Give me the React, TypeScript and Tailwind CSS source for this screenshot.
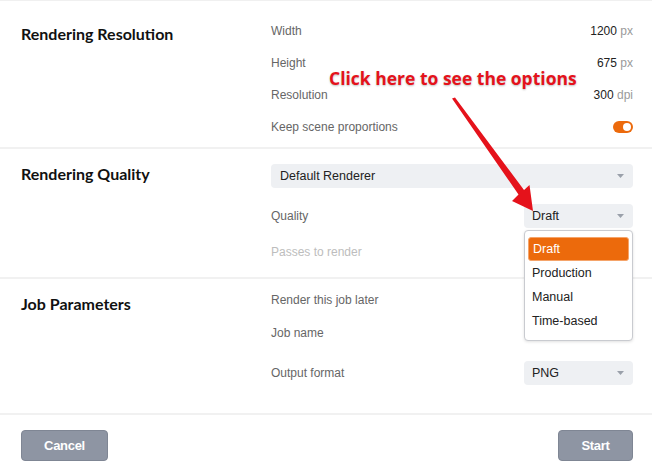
import React from "react";

const body = "font-['Liberation_Sans',Arial,sans-serif]";

function Caret() {
  return (
    <svg width="7" height="4" viewBox="0 0 7 4" className="shrink-0">
      <path d="M0 0 L7 0 L3.5 4 Z" fill="#9aa0aa" />
    </svg>
  );
}

function Select({ value, className = "" }: { value: string; className?: string }) {
  return (
    <div
      className={`h-6 rounded-[4px] bg-[#eef0f3] flex items-center justify-between pl-2 pr-[9px] text-[12.5px] text-[#222] ${className}`}
    >
      <span>{value}</span>
      <Caret />
    </div>
  );
}

function Row({ label, children, className = "" }: { label: string; children?: React.ReactNode; className?: string }) {
  return (
    <div className={`flex items-center justify-between ${className}`}>
      <span className="text-[12px] text-[#666]">{label}</span>
      {children}
    </div>
  );
}

function Value({ n, unit }: { n: string; unit: string }) {
  return (
    <span className="text-[12px] text-[#222]">
      {n} <span className="text-[#9a9a9a]">{unit}</span>
    </span>
  );
}

function Title({ children, className = "" }: { children: React.ReactNode; className?: string }) {
  return (
    <div className={`w-[270px] shrink-0 pl-[21px] font-['Lato',sans-serif] font-bold text-[16px] leading-5 text-[#111] ${className}`}>
      {children}
    </div>
  );
}

export default function App() {
  const options = ["Draft", "Production", "Manual", "Time-based"];

  return (
    <div className={`relative w-[652px] h-[476px] bg-white overflow-hidden border-t border-[#f0f0f0] ${body}`}>
      {/* Rendering Resolution */}
      <section className="flex border-b-2 border-[#f1f1f1] pt-[14px] pb-[4px]">
        <Title className="pt-[9px]">Rendering Resolution</Title>
        <div className="flex-1 pr-[19px] pl-[1px]">
          <Row label="Width" className="h-8">
            <Value n="1200" unit="px" />
          </Row>
          <Row label="Height" className="h-8">
            <Value n="675" unit="px" />
          </Row>
          <Row label="Resolution" className="h-8">
            <Value n="300" unit="dpi" />
          </Row>
          <Row label="Keep scene proportions" className="h-8">
            <div className="w-5 h-3 rounded-full bg-[#ec6a0c] flex items-center justify-end pr-[2px]">
              <div className="w-2 h-2 rounded-full bg-white" />
            </div>
          </Row>
        </div>
      </section>

      {/* Rendering Quality */}
      <section className="flex border-b-2 border-[#f1f1f1] pt-[15px] pb-[13px]">
        <Title>Rendering Quality</Title>
        <div className="flex-1 pr-[19px] pl-[1px]">
          <Select value="Default Renderer" className="pl-[9px]" />
          <Row label="Quality" className="h-6 mt-4">
            <Select value="Draft" className="w-[109px]" />
          </Row>
          <Row label="Passes to render" className="h-6 mt-[12px] [&>span]:text-[#bdbdbd]" />
        </div>
      </section>

      {/* Job Parameters */}
      <section className="flex border-b-2 border-[#f1f1f1] pt-[9px] pb-[28px]">
        <Title className="pt-[6px]">Job Parameters</Title>
        <div className="flex-1 pr-[19px] pl-[1px]">
          <Row label="Render this job later" className="h-6" />
          <Row label="Job name" className="h-6 mt-[9px]" />
          <Row label="Output format" className="h-6 mt-[16px]">
            <Select value="PNG" className="w-[109px]" />
          </Row>
        </div>
      </section>

      {/* Footer */}
      <footer className="flex justify-between pr-[19px] pl-[21px] pt-[15px]">
        <button className="w-[87px] h-[31px] rounded-[4px] bg-[#8e95a3] border border-[#7f8694] text-white font-bold text-[13px] tracking-[-0.3px]">
          Cancel
        </button>
        <button className="w-[75px] h-[31px] rounded-[4px] bg-[#8e95a3] border border-[#7f8694] text-white font-bold text-[13px] tracking-[-0.3px]">
          Start
        </button>
      </footer>

      {/* Open dropdown menu */}
      <div className="absolute left-[524px] top-[229px] w-[109px] h-[111px] bg-white border border-[#c9cbd0] rounded-[4px] shadow-[0_1px_3px_rgba(0,0,0,0.12)] px-[3px] pt-[6px]">
        {options.map((o, i) => (
          <div
            key={o}
            className={`h-6 flex items-center pl-[4px] text-[12.5px] rounded-[3px] ${
              i === 0 ? "bg-[#ec6a0c] text-white border border-[#f5a46a]" : "text-[#222]"
            }`}
          >
            {o}
          </div>
        ))}
      </div>

      {/* Annotation */}
      <div className="absolute left-[329px] top-[65px] font-['Open_Sans',sans-serif] font-bold text-[17.5px] leading-6 text-[#e5121b] [text-shadow:0_1px_2px_rgba(0,0,0,0.25)] whitespace-nowrap">
        Click here to see the options
      </div>
      <svg className="absolute left-0 top-0 pointer-events-none" width="652" height="476">
        <polygon
          points="452,97.5 455,96.5 524,189 529.5,184 533,210 512,200 518.5,193.5"
          fill="#e5121b"
        />
      </svg>
    </div>
  );
}
